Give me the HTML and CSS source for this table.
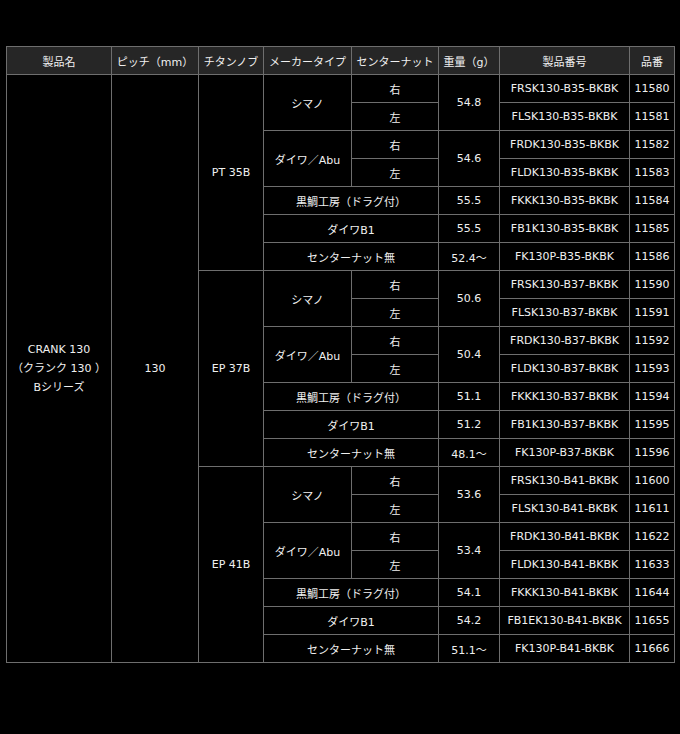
FILE: index.html
```html
<!DOCTYPE html>
<html lang="ja">
<head>
<meta charset="utf-8">
<title>CRANK 130 Bシリーズ</title>
<link rel="stylesheet" href="styles.css">
</head>
<body>
<table class="spec">
<colgroup>
<col class="c1"><col class="c2"><col class="c3"><col class="c4"><col class="c5"><col class="c6"><col class="c7"><col class="c8">
</colgroup>
<thead>
<tr><th>製品名</th><th>ピッチ（mm）</th><th>チタンノブ</th><th>メーカータイプ</th><th>センターナット</th><th>重量（g）</th><th>製品番号</th><th>品番</th></tr>
</thead>
<tbody>
<tr><td rowspan="21" class="name">CRANK 130<br>（クランク 130 ）<br>Bシリーズ</td><td rowspan="21">130</td><td rowspan="7">PT 35B</td><td rowspan="2">シマノ</td><td>右</td><td rowspan="2">54.8</td><td>FRSK130-B35-BKBK</td><td>11580</td></tr>
<tr><td>左</td><td>FLSK130-B35-BKBK</td><td>11581</td></tr>
<tr><td rowspan="2">ダイワ／Abu</td><td>右</td><td rowspan="2">54.6</td><td>FRDK130-B35-BKBK</td><td>11582</td></tr>
<tr><td>左</td><td>FLDK130-B35-BKBK</td><td>11583</td></tr>
<tr><td colspan="2">黒鯛工房（ドラグ付）</td><td>55.5</td><td>FKKK130-B35-BKBK</td><td>11584</td></tr>
<tr><td colspan="2">ダイワB1</td><td>55.5</td><td>FB1K130-B35-BKBK</td><td>11585</td></tr>
<tr><td colspan="2">センターナット無</td><td>52.4～</td><td>FK130P-B35-BKBK</td><td>11586</td></tr>

<tr><td rowspan="7">EP 37B</td><td rowspan="2">シマノ</td><td>右</td><td rowspan="2">50.6</td><td>FRSK130-B37-BKBK</td><td>11590</td></tr>
<tr><td>左</td><td>FLSK130-B37-BKBK</td><td>11591</td></tr>
<tr><td rowspan="2">ダイワ／Abu</td><td>右</td><td rowspan="2">50.4</td><td>FRDK130-B37-BKBK</td><td>11592</td></tr>
<tr><td>左</td><td>FLDK130-B37-BKBK</td><td>11593</td></tr>
<tr><td colspan="2">黒鯛工房（ドラグ付）</td><td>51.1</td><td>FKKK130-B37-BKBK</td><td>11594</td></tr>
<tr><td colspan="2">ダイワB1</td><td>51.2</td><td>FB1K130-B37-BKBK</td><td>11595</td></tr>
<tr><td colspan="2">センターナット無</td><td>48.1～</td><td>FK130P-B37-BKBK</td><td>11596</td></tr>

<tr><td rowspan="7">EP 41B</td><td rowspan="2">シマノ</td><td>右</td><td rowspan="2">53.6</td><td>FRSK130-B41-BKBK</td><td>11600</td></tr>
<tr><td>左</td><td>FLSK130-B41-BKBK</td><td>11611</td></tr>
<tr><td rowspan="2">ダイワ／Abu</td><td>右</td><td rowspan="2">53.4</td><td>FRDK130-B41-BKBK</td><td>11622</td></tr>
<tr><td>左</td><td>FLDK130-B41-BKBK</td><td>11633</td></tr>
<tr><td colspan="2">黒鯛工房（ドラグ付）</td><td>54.1</td><td>FKKK130-B41-BKBK</td><td>11644</td></tr>
<tr><td colspan="2">ダイワB1</td><td>54.2</td><td>FB1EK130-B41-BKBK</td><td>11655</td></tr>
<tr><td colspan="2">センターナット無</td><td>51.1～</td><td>FK130P-B41-BKBK</td><td>11666</td></tr>
</tbody>
</table>
</body>
</html>
```
FILE: styles.css
```css
html, body {
  background: #000;
}
body {
  margin: 0;
  padding: 46px 6px 0 6px;
  color: #f0f0f0;
  font-family: "DejaVu Sans", "Noto Sans CJK JP", sans-serif;
  font-size: 11px;
}
.spec {
  border-collapse: collapse;
  table-layout: fixed;
  width: 668px;
}
.spec th, .spec td {
  border: 1px solid #6e6e6e;
  padding: 0;
  height: 27px;
  text-align: center;
  vertical-align: middle;
  font-weight: normal;
  white-space: nowrap;
}
.spec th {
  background: #262626;
}
.spec td.name {
  line-height: 19px;
}
.c1 { width: 105px; }
.c2 { width: 87px; }
.c3 { width: 65px; }
.c4 { width: 88px; }
.c5 { width: 87px; }
.c6 { width: 61px; }
.c7 { width: 130px; }
.c8 { width: 45px; }
```
